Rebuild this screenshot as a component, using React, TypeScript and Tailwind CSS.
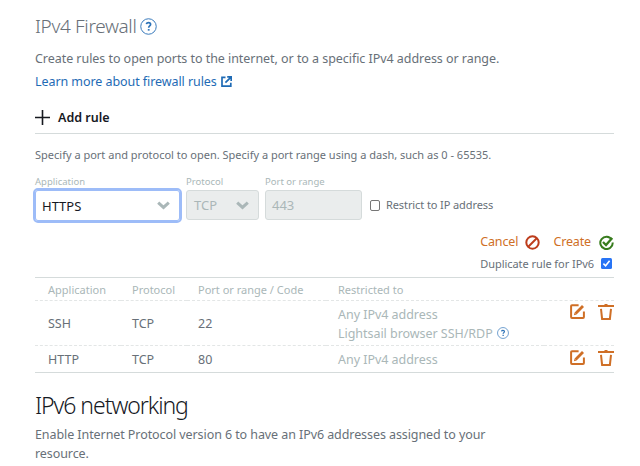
import React from "react";

function HelpIcon({ size }: { size: number }) {
  return (
    <svg width={size} height={size} viewBox="0 0 18 18" fill="none" stroke="#2e73b8" className="shrink-0">
      <circle cx="9" cy="9" r="8.2" strokeWidth="1" />
      <path d="M6.7 6.5C7 5.4 7.9 5 9 5c1.3 0 2.2.7 2.2 1.8 0 1.6-2 1.7-2 3.5" strokeWidth="1.8" />
      <path d="M9.2 11.7v1.7" strokeWidth="1.9" />
    </svg>
  );
}

function ExternalIcon() {
  return (
    <svg width="11" height="11" viewBox="0 0 11 11" fill="none" stroke="#1f6bb5" strokeWidth="1.7" className="mb-[2px] shrink-0">
      <path d="M4.5 1.3H1v8.8h8.8V6.8M6.2.9h4v4M10 1.1 4.4 6.7" />
    </svg>
  );
}

function Chevron() {
  return (
    <svg width="13" height="9" viewBox="0 0 13 9" fill="none" stroke="#aab7b8" strokeWidth="3" className="shrink-0">
      <path d="M1.2 1.6 6.5 6.4l5.3-4.8" />
    </svg>
  );
}

function EditIcon() {
  return (
    <svg width="15" height="15" viewBox="0 0 15 15" fill="none" stroke="#cf6f26" className="shrink-0">
      <path d="M8.6 1.2H2Q1.1 1.2 1.1 2.1V13q0 .9.9.9h11q.9 0 .9-.9V7.6" strokeWidth="2" />
      <path d="M5.6 9.5 13 2.1" strokeWidth="2.8" />
      <path d="m3.9 11.2.7-2.7 2 2z" fill="#cf6f26" stroke="none" />
    </svg>
  );
}

function TrashIcon() {
  return (
    <svg width="16" height="16" viewBox="0 0 16 16" fill="none" stroke="#cf6f26" className="shrink-0">
      <path d="M0 2h16" strokeWidth="2" />
      <path d="M6.5.7h3" strokeWidth="1.4" />
      <path d="M3 4.8 4.1 14.9h7.8L13 4.8" strokeWidth="2" />
    </svg>
  );
}

function Actions() {
  return (
    <div className="flex h-full items-start justify-end gap-[13px] border-b border-dashed border-[#e3e6e6] pt-[3px] group-last:border-0 group-last:pt-[4px]">
      <EditIcon />
      <TrashIcon />
    </div>
  );
}

const cell = "flex items-center border-b border-dashed border-[#e3e6e6] pt-[2px] group-last:border-0";
const grid = "group grid grid-cols-[86px_66px_139px_218px_70px]";

export default function App() {
  return (
    <div className="h-[466px] w-[640px] overflow-hidden bg-white pl-[35px] pr-[26px] pt-[13px] font-['Noto_Sans',sans-serif] text-[#687078]">
      <h2 className="flex h-[26px] items-center gap-[4px] text-[19px] font-light leading-[26px]">
        <span className="w-[101px] whitespace-nowrap tracking-[-0.35px]">IPv4 Firewall</span>
        <HelpIcon size={17} />
      </h2>
      <p className="mt-[10px] h-5 whitespace-nowrap text-[12.5px] leading-5 tracking-[-0.05px]">
        Create rules to open ports to the internet, or to a specific IPv4 address or range.
      </p>
      <a className="mt-[3px] flex h-5 items-center gap-1 text-[12.5px] leading-5 tracking-[-0.07px] text-[#1f6bb5]">
        <span className="whitespace-nowrap">Learn more about firewall rules</span>
        <ExternalIcon />
      </a>
      <div className="mt-4 flex h-[26px] items-start gap-[8px] border-b border-[#d5dbdb] text-[12.5px] font-semibold leading-5 text-[#16191f]">
        <svg width="15" height="20" viewBox="0 0 15 20" stroke="#16191f" strokeWidth="1.6">
          <path d="M0 9.5h15M7.5 2v15" />
        </svg>
        <span className="whitespace-nowrap">Add rule</span>
      </div>
      <p className="mt-[12px] h-[18px] whitespace-nowrap text-[11px] leading-[18px]">
        Specify a port and protocol to open. Specify a port range using a dash, such as 0 - 65535.
      </p>

      <div className="mt-[11px] flex h-[46px] text-[9.5px] leading-[14px] text-[#aab7b8]">
        <div className="w-[151px]">
          <div className="h-[14px]">Application</div>
          <div className="mt-px flex h-[31px] w-[145px] items-center justify-between rounded-[3px] bg-white pl-[7px] pr-[10px] text-[13px] text-[#16191f] outline-2 outline-[#9dbcf8] ring-1 ring-inset ring-[#9dbcf8]">
            <span>HTTPS</span>
            <Chevron />
          </div>
        </div>
        <div className="w-[79px]">
          <div className="h-[14px]">Protocol</div>
          <div className="mt-px flex h-[30px] w-[73px] items-center justify-between rounded-[3px] border border-[#d5dbdb] bg-[#eaeded] pl-[7px] pr-[9px] text-[13px]">
            <span>TCP</span>
            <Chevron />
          </div>
        </div>
        <div className="w-[105px]">
          <div className="h-[14px] whitespace-nowrap">Port or range</div>
          <div className="mt-px flex h-[30px] w-[97px] items-center rounded-[3px] border border-[#d5dbdb] bg-[#eaeded] pl-[6px] text-[13px]">443</div>
        </div>
        <label className="flex h-[46px] items-center gap-[6px] pt-[14px] text-[11px] text-[#687078]">
          <span className="h-[11px] w-[10px] rounded-[2px] border border-[#767676] bg-white" />
          <span className="whitespace-nowrap tracking-[-0.1px]">Restrict to IP address</span>
        </label>
      </div>

      <div className="mt-[11px] flex h-5 items-center justify-end text-[12.5px] leading-5 text-[#cf6f26]">
        <span className="mr-[7px] tracking-[-0.1px]">Cancel</span>
        <svg width="15" height="15" viewBox="0 0 15 15" fill="none" stroke="#bd3d1c" strokeWidth="2">
          <circle cx="7.5" cy="7.5" r="6.2" />
          <path d="M3 12 12 3" />
        </svg>
        <span className="ml-[13px] mr-[8px] tracking-[-0.15px]">Create</span>
        <svg width="15" height="15" viewBox="0 0 15 15" fill="none" stroke="#387c1e" strokeWidth="2">
          <path d="M12.8 4.6A6.2 6.2 0 1 0 13.7 7.5" />
          <path d="m4 7 3 3 6.2-7" strokeWidth="2.3" />
        </svg>
      </div>
      <div className="mt-[3px] flex h-[18px] items-center justify-end gap-[7px] pr-[2px] text-[11px] leading-[18px]">
        <span className="whitespace-nowrap tracking-[-0.06px]">Duplicate rule for IPv6</span>
        <svg width="11" height="11" viewBox="0 0 11 11" className="mb-[2px]">
          <rect width="11" height="11" rx="1.5" fill="#2874f5" />
          <path d="m2.4 5.7 2.2 2.1 4-5" fill="none" stroke="#fff" strokeWidth="1.6" />
        </svg>
      </div>

      <div className="mt-[4px] border-y border-[#d5dbdb] text-[12.5px]">
        <div className={`${grid} h-[23px] text-[11px] text-[#aab7b8]`}>
          <div className={`${cell} pl-[13px]`}>Application</div>
          <div className={`${cell} pl-[11px]`}>Protocol</div>
          <div className={`${cell} whitespace-nowrap pl-[11px]`}>Port or range / Code</div>
          <div className={`${cell} pl-[12px]`}>Restricted to</div>
          <div className={cell} />
        </div>
        <div className={`${grid} h-[45px]`}>
          <div className={`${cell} pl-[13px]`}>SSH</div>
          <div className={`${cell} pl-[11px]`}>TCP</div>
          <div className={`${cell} pl-[11px]`}>22</div>
          <div className="flex flex-col justify-center border-b border-dashed border-[#e3e6e6] pl-[12px] pt-px leading-[19px] tracking-[-0.04px] text-[#aab7b8]">
            <span className="whitespace-nowrap">Any IPv4 address</span>
            <span className="flex items-center gap-[4px]">
              <span className="whitespace-nowrap">Lightsail browser SSH/RDP</span>
              <HelpIcon size={12} />
            </span>
          </div>
          <Actions />
        </div>
        <div className={`${grid} h-[26px]`}>
          <div className={`${cell} pl-[13px]`}>HTTP</div>
          <div className={`${cell} pl-[11px]`}>TCP</div>
          <div className={`${cell} pl-[11px]`}>80</div>
          <div className={`${cell} whitespace-nowrap pl-[12px] tracking-[-0.04px] text-[#aab7b8]`}>Any IPv4 address</div>
          <Actions />
        </div>
      </div>

      <h1 className="mt-[16px] h-8 whitespace-nowrap text-[23px] font-light leading-8 tracking-[-1.05px] text-[#16191f]">IPv6 networking</h1>
      <p className="mt-[4px] whitespace-nowrap text-[12.5px] leading-[19px] tracking-[-0.08px]">
        Enable Internet Protocol version 6 to have an IPv6 addresses assigned to your
        <br />
        resource.
      </p>
    </div>
  );
}
